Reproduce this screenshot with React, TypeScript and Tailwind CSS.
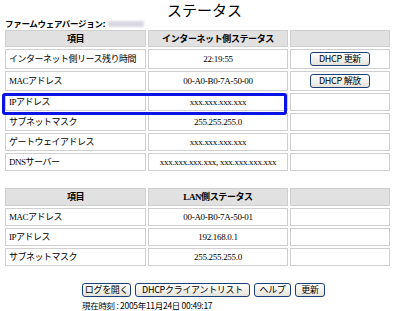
import React from "react";

const jp = { fontFamily: '"Noto Sans CJK JP",sans-serif' };
const serif = { fontFamily: '"Liberation Serif","Noto Sans CJK JP",serif' };

function Btn({ children, w }: { children: React.ReactNode; w: string }) {
  return (
    <button
      className={`h-[14px] ${w} rounded-[3px] border border-[#1c3f7a] bg-gradient-to-b from-white to-[#e6e3da] text-[9px] leading-[12px] tracking-[-0.3px] text-black whitespace-nowrap p-0`}
      style={jp}
    >
      {children}
    </button>
  );
}

const td = "border border-[#cfcfcf] px-[3px] py-0 text-[9px] leading-[12px] whitespace-nowrap";
const th = "border border-[#cfcfcf] h-[17px] bg-[#e1e1e1] text-[9px] font-bold leading-[12px] tracking-[-0.4px] whitespace-nowrap";

export default function App() {
  const rows1: [string, string, React.ReactNode][] = [
    ["インターネット側リース残り時間", "22:19:55", <Btn w="w-[60px]">DHCP 更新</Btn>],
    ["MACアドレス", "00-A0-B0-7A-50-00", <Btn w="w-[60px]">DHCP 解放</Btn>],
    ["IPアドレス", "xxx.xxx.xxx.xxx", null],
    ["サブネットマスク", "255.255.255.0", null],
    ["ゲートウェイアドレス", "xxx.xxx.xxx.xxx", null],
    ["DNSサーバー", "xxx.xxx.xxx.xxx, xxx.xxx.xxx.xxx", null],
  ];
  const rows2: [string, string][] = [
    ["MACアドレス", "00-A0-B0-7A-50-01"],
    ["IPアドレス", "192.168.0.1"],
    ["サブネットマスク", "255.255.255.0"],
  ];
  return (
    <div className="relative w-[400px] h-[311px] bg-white text-black overflow-hidden" style={jp}>
      <div className="h-[19px] text-center text-[15px] leading-[19px] pl-[9px]">ステータス</div>
      <div className="flex items-center pl-[5px] h-[9px] text-[8.5px] font-bold leading-[9px] tracking-[-0.3px]">
        ファームウェアバージョン:
        <span className="ml-[3px] inline-block h-[6px] w-[36px] bg-[#d8d8e0] blur-[1px]" />
      </div>
      <table className="ml-[3px] w-[389px] border-separate border-spacing-[2px] table-fixed">
        <colgroup>
          <col className="w-[141px]" />
          <col className="w-[140px]" />
          <col />
        </colgroup>
        <thead>
          <tr>
            <th className={th}>項目</th>
            <th className={th}>インターネット側ステータス</th>
            <th className={th}></th>
          </tr>
        </thead>
        <tbody>
          {rows1.map(([a, b, c], i) => {
            const h = c ? "h-[20px]" : "h-[18px]";
            return (
              <tr key={i}>
                <td className={`${td} ${h} text-left tracking-[-0.5px]`} style={serif}>{a}</td>
                <td className={`${td} ${h} text-center text-[8px] tracking-[-0.3px]`} style={serif}>{b}</td>
                <td className={`${td} ${h} text-center`}>{c}</td>
              </tr>
            );
          })}
        </tbody>
      </table>
      <table className="ml-[3px] mt-[13px] w-[389px] border-separate border-spacing-[2px] table-fixed">
        <colgroup>
          <col className="w-[141px]" />
          <col className="w-[140px]" />
          <col />
        </colgroup>
        <thead>
          <tr>
            <th className={`${th} h-[18px]`}>項目</th>
            <th className={`${th} h-[18px]`} style={serif}>LAN側ステータス</th>
            <th className={`${th} h-[18px]`}></th>
          </tr>
        </thead>
        <tbody>
          {rows2.map(([a, b], i) => (
            <tr key={i}>
              <td className={`${td} h-[18px] text-left tracking-[-0.5px]`} style={serif}>{a}</td>
              <td className={`${td} h-[18px] text-center text-[8px] tracking-[-0.3px]`} style={serif}>{b}</td>
              <td className={`${td} h-[18px]`}></td>
            </tr>
          ))}
        </tbody>
      </table>
      <div className="mt-[15px] pl-[82px] flex gap-[4px]">
        <Btn w="w-[49px]">ログを開く</Btn>
        <Btn w="w-[115px]">DHCPクライアントリスト</Btn>
        <Btn w="w-[37px]">ヘルプ</Btn>
        <Btn w="w-[30px]">更新</Btn>
      </div>
      <div className="pl-[82px] mt-[3px] text-[8.5px] leading-[10px] tracking-[-0.3px]">現在時刻 : 2005年11月24日 00:49:17</div>
      <div className="absolute left-[2px] top-[93px] w-[285px] h-[22px] border-[3px] border-[#0a14e6] rounded-[3px]" />
    </div>
  );
}
